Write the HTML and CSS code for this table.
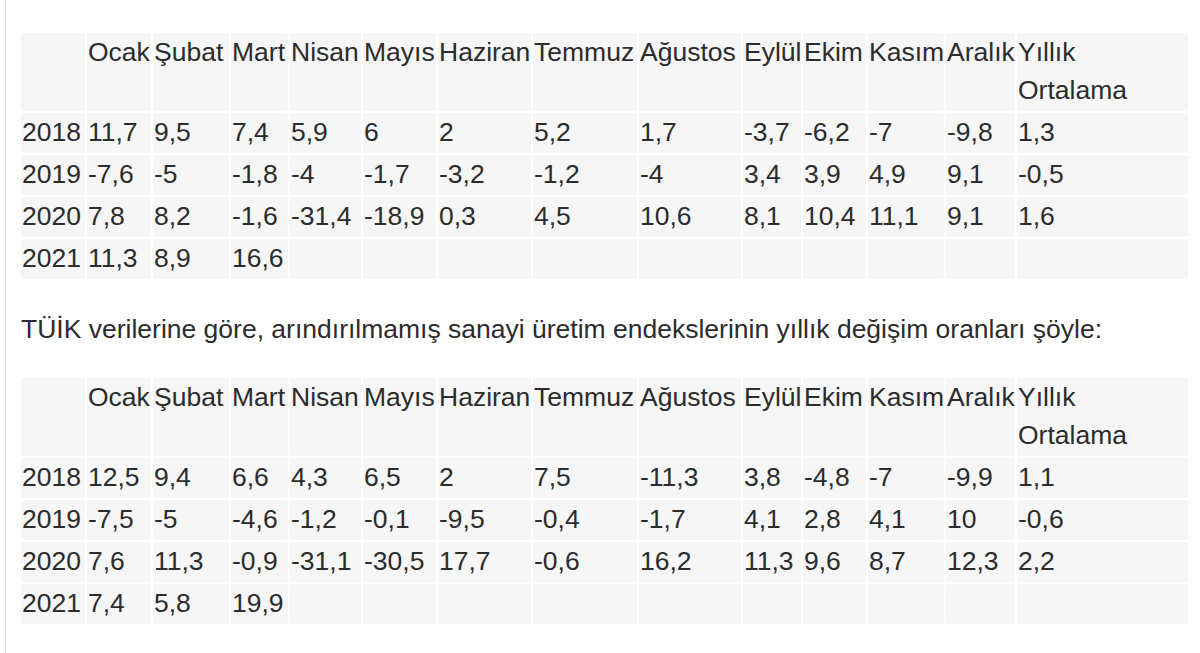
FILE: index.html
```html
<!DOCTYPE html>
<html lang="tr">
<head>
<meta charset="utf-8">
<title>Sanayi üretim endeksi</title>
<link rel="stylesheet" href="styles.css">
</head>
<body>
<div class="page">
  <table class="data">
    <thead>
      <tr><th></th><th>Ocak</th><th>Şubat</th><th>Mart</th><th>Nisan</th><th>Mayıs</th><th>Haziran</th><th>Temmuz</th><th>Ağustos</th><th>Eylül</th><th>Ekim</th><th>Kasım</th><th>Aralık</th><th>Yıllık<br>Ortalama</th></tr>
    </thead>
    <tbody>
      <tr><td>2018</td><td>11,7</td><td>9,5</td><td>7,4</td><td>5,9</td><td>6</td><td>2</td><td>5,2</td><td>1,7</td><td>-3,7</td><td>-6,2</td><td>-7</td><td>-9,8</td><td>1,3</td></tr>
      <tr><td>2019</td><td>-7,6</td><td>-5</td><td>-1,8</td><td>-4</td><td>-1,7</td><td>-3,2</td><td>-1,2</td><td>-4</td><td>3,4</td><td>3,9</td><td>4,9</td><td>9,1</td><td>-0,5</td></tr>
      <tr><td>2020</td><td>7,8</td><td>8,2</td><td>-1,6</td><td>-31,4</td><td>-18,9</td><td>0,3</td><td>4,5</td><td>10,6</td><td>8,1</td><td>10,4</td><td>11,1</td><td>9,1</td><td>1,6</td></tr>
      <tr><td>2021</td><td>11,3</td><td>8,9</td><td>16,6</td><td></td><td></td><td></td><td></td><td></td><td></td><td></td><td></td><td></td><td></td></tr>
    </tbody>
  </table>

  <p class="lead">TÜİK verilerine göre, arındırılmamış sanayi üretim endekslerinin yıllık değişim oranları şöyle:</p>

  <table class="data">
    <thead>
      <tr><th></th><th>Ocak</th><th>Şubat</th><th>Mart</th><th>Nisan</th><th>Mayıs</th><th>Haziran</th><th>Temmuz</th><th>Ağustos</th><th>Eylül</th><th>Ekim</th><th>Kasım</th><th>Aralık</th><th>Yıllık<br>Ortalama</th></tr>
    </thead>
    <tbody>
      <tr><td>2018</td><td>12,5</td><td>9,4</td><td>6,6</td><td>4,3</td><td>6,5</td><td>2</td><td>7,5</td><td>-11,3</td><td>3,8</td><td>-4,8</td><td>-7</td><td>-9,9</td><td>1,1</td></tr>
      <tr><td>2019</td><td>-7,5</td><td>-5</td><td>-4,6</td><td>-1,2</td><td>-0,1</td><td>-9,5</td><td>-0,4</td><td>-1,7</td><td>4,1</td><td>2,8</td><td>4,1</td><td>10</td><td>-0,6</td></tr>
      <tr><td>2020</td><td>7,6</td><td>11,3</td><td>-0,9</td><td>-31,1</td><td>-30,5</td><td>17,7</td><td>-0,6</td><td>16,2</td><td>11,3</td><td>9,6</td><td>8,7</td><td>12,3</td><td>2,2</td></tr>
      <tr><td>2021</td><td>7,4</td><td>5,8</td><td>19,9</td><td></td><td></td><td></td><td></td><td></td><td></td><td></td><td></td><td></td><td></td></tr>
    </tbody>
  </table>
</div>
</body>
</html>
```

FILE: styles.css
```css
html, body {
  margin: 0;
  padding: 0;
  background: #ffffff;
}

body {
  font-family: "Liberation Sans", Arial, Helvetica, sans-serif;
  color: #2c2c2c;
  font-size: 26.5px;
}

.page {
  margin-left: 5px;
  border-left: 1px solid #e6e6e6;
  padding: 31px 0 40px 13px;
  min-height: 653px;
  box-sizing: border-box;
}

.data {
  table-layout: fixed;
  border-collapse: separate;
  border-spacing: 2px;
  width: 1171px;
}

.data th,
.data td {
  box-sizing: border-box;
  background: #f6f6f6;
  border-radius: 2px;
  padding: 0 1px 2px;
  line-height: 38px;
  font-weight: normal;
  text-align: left;
  vertical-align: top;
  white-space: nowrap;
  overflow: hidden;
}

.data th:nth-child(1)  { width: 64px; }
.data th:nth-child(2)  { width: 64px; }
.data th:nth-child(3)  { width: 76px; }
.data th:nth-child(4)  { width: 57px; }
.data th:nth-child(5)  { width: 71px; }
.data th:nth-child(6)  { width: 73px; }
.data th:nth-child(7)  { width: 93px; }
.data th:nth-child(8)  { width: 104px; }
.data th:nth-child(9)  { width: 102px; }
.data th:nth-child(10) { width: 58px; }
.data th:nth-child(11) { width: 63px; }
.data th:nth-child(12) { width: 76px; }
.data th:nth-child(13) { width: 69px; }
.data th:nth-child(14) { width: 171px; }

.lead {
  margin: 29px 0 28px 2px;
  line-height: 38px;
  white-space: nowrap;
}
```
